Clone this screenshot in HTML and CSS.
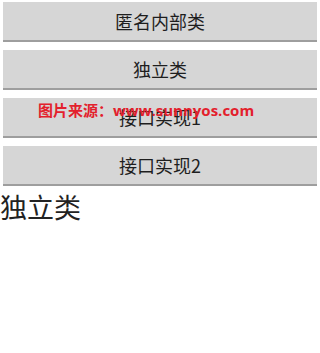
FILE: index.html
```html
<!DOCTYPE html>
<html>
<head>
<meta charset="utf-8">
<link rel="stylesheet" href="styles.css">
</head>
<body>
<div class="buttons">
  <div class="btn">匿名内部类</div>
  <div class="btn">独立类</div>
  <div class="btn">接口实现1<span class="watermark">图片来源：www.sunnyos.com</span></div>
  <div class="btn">接口实现2</div>
</div>
<div class="result">独立类</div>
</body>
</html>
```

FILE: styles.css
```css
html, body {
  margin: 0;
  padding: 0;
  background: #ffffff;
  font-family: "Noto Sans CJK SC", "Noto Sans", sans-serif;
}
.buttons {
  display: flex;
  flex-direction: column;
  gap: 8px;
  padding: 2px 3px 0 3px;
}
.btn {
  position: relative;
  height: 38px;
  background: #d6d6d6;
  border-bottom: 2px solid #9e9e9e;
  display: flex;
  align-items: center;
  justify-content: center;
  font-size: 18px;
  color: #1e1e1e;
  box-sizing: content-box;
}
.watermark {
  position: absolute;
  left: 35px;
  top: 1px;
  font-size: 15px;
  font-weight: bold;
  color: #e3202c;
  white-space: nowrap;
  font-family: "Open Sans", "Noto Sans CJK SC", sans-serif;
}
.result {
  font-size: 27px;
  color: #222222;
  line-height: 34px;
  margin-top: 4px;
}
```
